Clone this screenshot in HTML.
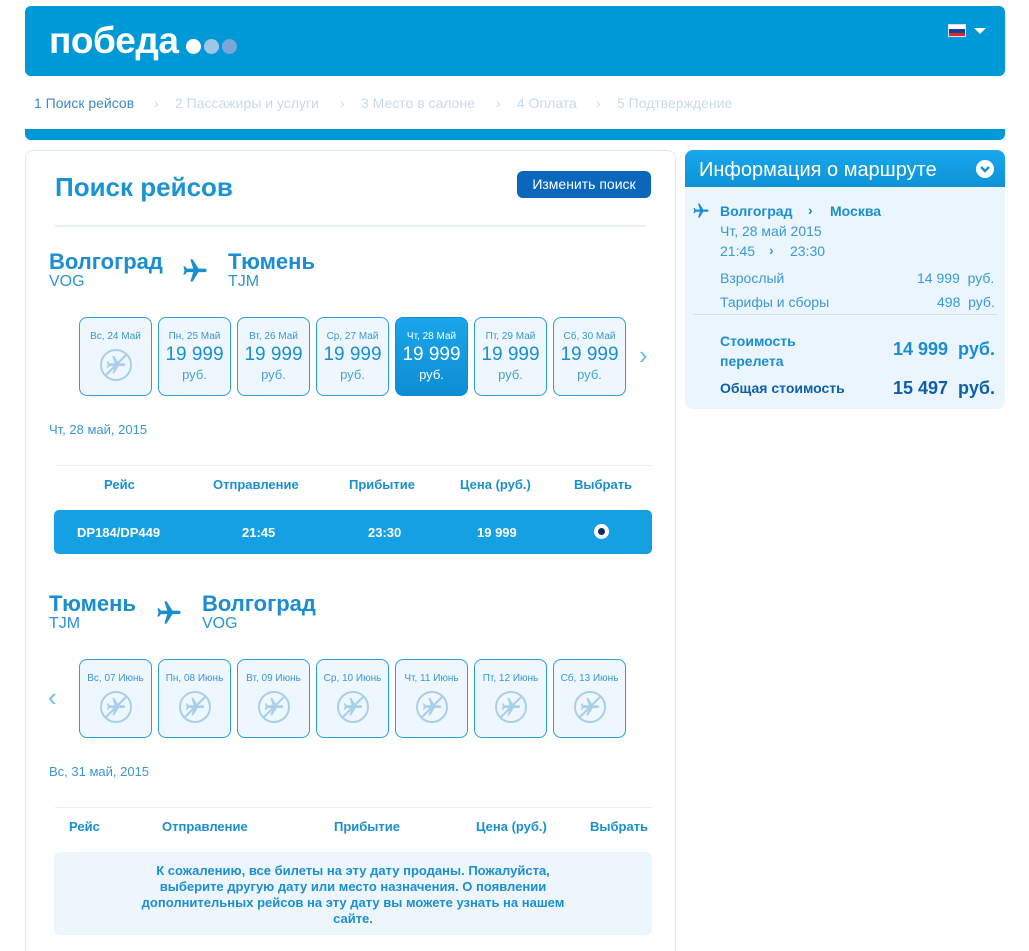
<!DOCTYPE html>
<html style="overflow:hidden;height:951px"><head><meta charset="utf-8"><style>
*{margin:0;padding:0;box-sizing:border-box}
body{width:1029px;height:951px;background:#fff;font-family:"Liberation Sans","Noto Sans CJK SC",sans-serif;position:relative;overflow:hidden;color:#1a8fd0}
.a{position:absolute;white-space:nowrap}
.hdr{left:25px;top:6px;width:980px;height:70px;background:#0099d8;border-radius:6px}
.logo{left:49px;top:20px;font-size:37px;font-weight:bold;color:#fff;letter-spacing:-0.5px}
.dot{position:absolute;width:15px;height:15px;border-radius:50%}
.bc{top:95px;font-size:14px;color:#c5dbec}
.bar{left:25px;top:129px;width:980px;height:11px;background:#0099d8;border-radius:0 0 6px 6px}
.lp{left:25px;top:150px;width:651px;height:830px;border:1px solid #dce9f3;border-radius:8px}
.title{left:55px;top:172px;font-size:26px;font-weight:bold;color:#1993d2}
.btn{left:517px;top:171px;width:134px;height:27px;background:#0b67bb;border-radius:6px;color:#fff;font-size:14px;text-align:center;line-height:27px}
.hr{height:2px;background:#e6eff7}
.city{font-size:22px;font-weight:bold;color:#1a8ed0}
.code{font-size:16px;color:#2a95d2}
.card{position:absolute;width:73px;height:79px;border:1px solid #2b9fd6;border-radius:8px;background:#eef7fd;text-align:center;color:#1a8fd0}
.card .d{font-size:10px;margin-top:13px;color:#3a97cf}
.card .p{font-size:19px;line-height:22px;margin-top:2px}
.card .r{font-size:13px;margin-top:1px;color:#4aa0d3}
.card.sel{background:linear-gradient(#19a6ea,#0e8dd5);border-color:#0e8dd5;color:#fff}
.card.sel .d,.card.sel .r{color:#fff}
.card svg{margin-top:6px}
.th{font-size:13px;font-weight:bold;color:#1a8fd0}
.row{left:54px;top:510px;width:598px;height:44px;background:#15a0e3;border-radius:5px;color:#fff;font-weight:bold;font-size:13px}
.msg{left:54px;top:852px;width:598px;height:83px;background:#eef6fd;border-radius:6px;text-align:center;font-size:13px;font-weight:bold;color:#1b8fd0;line-height:16px;padding-top:11px}
.rp{left:685px;top:150px;width:320px;height:259px;background:#eaf5fd;border-radius:8px;overflow:hidden}
.rph{height:37px;background:linear-gradient(#19a8ec,#0d92d8);color:#fff;font-size:20px;padding:9px 0 0 14px}
.rt{font-size:14px;color:#3a9ad3}
</style></head><body>
<div class="a hdr"></div>
<div class="a logo">победа</div>
<div class="dot" style="left:186px;top:39px;background:#fff"></div>
<div class="dot" style="left:204px;top:39px;background:#9fc6e6"></div>
<div class="dot" style="left:222px;top:39px;background:#7ba6d6"></div>
<div class="a" style="left:948px;top:24px;width:18px;height:13px;border:1px solid #ddd">
<div style="height:4px;background:#fff"></div><div style="height:4px;background:#1a3e9c"></div><div style="height:3px;background:#d92b2b"></div></div>
<div class="a" style="left:974px;top:28px;width:0;height:0;border-left:6px solid transparent;border-right:6px solid transparent;border-top:6px solid #fff"></div>

<div class="a bc" style="left:34px;color:#3a8cc0">1 Поиск рейсов</div>
<div class="a bc" style="left:154px">›</div>
<div class="a bc" style="left:175px">2 Пассажиры и услуги</div>
<div class="a bc" style="left:340px">›</div>
<div class="a bc" style="left:361px">3 Место в салоне</div>
<div class="a bc" style="left:496px">›</div>
<div class="a bc" style="left:517px">4 Оплата</div>
<div class="a bc" style="left:596px">›</div>
<div class="a bc" style="left:617px">5 Подтверждение</div>
<div class="a bar"></div>

<div class="a lp"></div>
<div class="a title">Поиск рейсов</div>
<div class="a btn">Изменить поиск</div>
<div class="a hr" style="left:55px;top:225px;width:591px"></div>

<div class="a city" style="left:49px;top:249px">Волгоград</div>
<div class="a code" style="left:49px;top:273px">VOG</div>
<svg class="a" style="left:181px;top:257px" width="28" height="28" viewBox="0 0 24 24"><path transform="rotate(90 12 12)" fill="#1a8fd0" d="M21 16v-2l-8-5V3.5c0-.83-.67-1.5-1.5-1.5S10 2.67 10 3.5V9l-8 5v2l8-2.5V19l-2 1.5V22l3.5-1 3.5 1v-1.5L13 19v-5.5l8 2.5z"/></svg>
<div class="a city" style="left:228px;top:249px">Тюмень</div>
<div class="a code" style="left:228px;top:273px">TJM</div>

<div class="card" style="left:79px;top:317px"><div class="d">Вс, 24 Май</div><svg width="34" height="34" viewBox="0 0 34 34"><circle cx="17" cy="17" r="15" fill="none" stroke="#a8d0eb" stroke-width="2"/><path transform="translate(6 6) scale(.92) rotate(90 12 12)" fill="#a8d0eb" d="M21 16v-2l-8-5V3.5c0-.83-.67-1.5-1.5-1.5S10 2.67 10 3.5V9l-8 5v2l8-2.5V19l-2 1.5V22l3.5-1 3.5 1v-1.5L13 19v-5.5l8 2.5z"/><path d="M6 28L28 6" stroke="#a8d0eb" stroke-width="2"/></svg></div>
<div class="card" style="left:158px;top:317px"><div class="d">Пн, 25 Май</div><div class="p">19 999</div><div class="r">руб.</div></div>
<div class="card" style="left:237px;top:317px"><div class="d">Вт, 26 Май</div><div class="p">19 999</div><div class="r">руб.</div></div>
<div class="card" style="left:316px;top:317px"><div class="d">Ср, 27 Май</div><div class="p">19 999</div><div class="r">руб.</div></div>
<div class="card sel" style="left:395px;top:317px"><div class="d">Чт, 28 Май</div><div class="p">19 999</div><div class="r">руб.</div></div>
<div class="card" style="left:474px;top:317px"><div class="d">Пт, 29 Май</div><div class="p">19 999</div><div class="r">руб.</div></div>
<div class="card" style="left:553px;top:317px"><div class="d">Сб, 30 Май</div><div class="p">19 999</div><div class="r">руб.</div></div>
<div class="a" style="left:639px;top:340px;font-size:26px;color:#6ebde3">›</div>

<div class="a" style="left:49px;top:422px;font-size:13px;color:#3a97cf">Чт, 28 май, 2015</div>
<div class="a hr" style="left:55px;top:465px;width:597px;height:1px"></div>
<div class="a th" style="left:104px;top:477px">Рейс</div>
<div class="a th" style="left:213px;top:477px">Отправление</div>
<div class="a th" style="left:349px;top:477px">Прибытие</div>
<div class="a th" style="left:460px;top:477px">Цена (руб.)</div>
<div class="a th" style="left:574px;top:477px">Выбрать</div>
<div class="a row">
<span class="a" style="left:23px;top:15px">DP184/DP449</span>
<span class="a" style="left:188px;top:15px">21:45</span>
<span class="a" style="left:314px;top:15px">23:30</span>
<span class="a" style="left:423px;top:15px">19 999</span>
<span class="a" style="left:540px;top:14px;width:15px;height:15px;border-radius:50%;background:#fff"><span class="a" style="left:4px;top:4px;width:7px;height:7px;border-radius:50%;background:#0e2d5e"></span></span>
</div>

<div class="a city" style="left:49px;top:591px">Тюмень</div>
<div class="a code" style="left:49px;top:615px">TJM</div>
<svg class="a" style="left:155px;top:599px" width="28" height="28" viewBox="0 0 24 24"><path transform="rotate(90 12 12)" fill="#1a8fd0" d="M21 16v-2l-8-5V3.5c0-.83-.67-1.5-1.5-1.5S10 2.67 10 3.5V9l-8 5v2l8-2.5V19l-2 1.5V22l3.5-1 3.5 1v-1.5L13 19v-5.5l8 2.5z"/></svg>
<div class="a city" style="left:202px;top:591px">Волгоград</div>
<div class="a code" style="left:202px;top:615px">VOG</div>

<div class="a" style="left:48px;top:682px;font-size:26px;color:#6ebde3">‹</div>
<div class="card" style="left:79px;top:659px"><div class="d">Вс, 07 Июнь</div><svg width="34" height="34" viewBox="0 0 34 34"><circle cx="17" cy="17" r="15" fill="none" stroke="#a8d0eb" stroke-width="2"/><path transform="translate(6 6) scale(.92) rotate(90 12 12)" fill="#a8d0eb" d="M21 16v-2l-8-5V3.5c0-.83-.67-1.5-1.5-1.5S10 2.67 10 3.5V9l-8 5v2l8-2.5V19l-2 1.5V22l3.5-1 3.5 1v-1.5L13 19v-5.5l8 2.5z"/><path d="M6 28L28 6" stroke="#a8d0eb" stroke-width="2"/></svg></div>
<div class="card" style="left:158px;top:659px"><div class="d">Пн, 08 Июнь</div><svg width="34" height="34" viewBox="0 0 34 34"><circle cx="17" cy="17" r="15" fill="none" stroke="#a8d0eb" stroke-width="2"/><path transform="translate(6 6) scale(.92) rotate(90 12 12)" fill="#a8d0eb" d="M21 16v-2l-8-5V3.5c0-.83-.67-1.5-1.5-1.5S10 2.67 10 3.5V9l-8 5v2l8-2.5V19l-2 1.5V22l3.5-1 3.5 1v-1.5L13 19v-5.5l8 2.5z"/><path d="M6 28L28 6" stroke="#a8d0eb" stroke-width="2"/></svg></div>
<div class="card" style="left:237px;top:659px"><div class="d">Вт, 09 Июнь</div><svg width="34" height="34" viewBox="0 0 34 34"><circle cx="17" cy="17" r="15" fill="none" stroke="#a8d0eb" stroke-width="2"/><path transform="translate(6 6) scale(.92) rotate(90 12 12)" fill="#a8d0eb" d="M21 16v-2l-8-5V3.5c0-.83-.67-1.5-1.5-1.5S10 2.67 10 3.5V9l-8 5v2l8-2.5V19l-2 1.5V22l3.5-1 3.5 1v-1.5L13 19v-5.5l8 2.5z"/><path d="M6 28L28 6" stroke="#a8d0eb" stroke-width="2"/></svg></div>
<div class="card" style="left:316px;top:659px"><div class="d">Ср, 10 Июнь</div><svg width="34" height="34" viewBox="0 0 34 34"><circle cx="17" cy="17" r="15" fill="none" stroke="#a8d0eb" stroke-width="2"/><path transform="translate(6 6) scale(.92) rotate(90 12 12)" fill="#a8d0eb" d="M21 16v-2l-8-5V3.5c0-.83-.67-1.5-1.5-1.5S10 2.67 10 3.5V9l-8 5v2l8-2.5V19l-2 1.5V22l3.5-1 3.5 1v-1.5L13 19v-5.5l8 2.5z"/><path d="M6 28L28 6" stroke="#a8d0eb" stroke-width="2"/></svg></div>
<div class="card" style="left:395px;top:659px"><div class="d">Чт, 11 Июнь</div><svg width="34" height="34" viewBox="0 0 34 34"><circle cx="17" cy="17" r="15" fill="none" stroke="#a8d0eb" stroke-width="2"/><path transform="translate(6 6) scale(.92) rotate(90 12 12)" fill="#a8d0eb" d="M21 16v-2l-8-5V3.5c0-.83-.67-1.5-1.5-1.5S10 2.67 10 3.5V9l-8 5v2l8-2.5V19l-2 1.5V22l3.5-1 3.5 1v-1.5L13 19v-5.5l8 2.5z"/><path d="M6 28L28 6" stroke="#a8d0eb" stroke-width="2"/></svg></div>
<div class="card" style="left:474px;top:659px"><div class="d">Пт, 12 Июнь</div><svg width="34" height="34" viewBox="0 0 34 34"><circle cx="17" cy="17" r="15" fill="none" stroke="#a8d0eb" stroke-width="2"/><path transform="translate(6 6) scale(.92) rotate(90 12 12)" fill="#a8d0eb" d="M21 16v-2l-8-5V3.5c0-.83-.67-1.5-1.5-1.5S10 2.67 10 3.5V9l-8 5v2l8-2.5V19l-2 1.5V22l3.5-1 3.5 1v-1.5L13 19v-5.5l8 2.5z"/><path d="M6 28L28 6" stroke="#a8d0eb" stroke-width="2"/></svg></div>
<div class="card" style="left:553px;top:659px"><div class="d">Сб, 13 Июнь</div><svg width="34" height="34" viewBox="0 0 34 34"><circle cx="17" cy="17" r="15" fill="none" stroke="#a8d0eb" stroke-width="2"/><path transform="translate(6 6) scale(.92) rotate(90 12 12)" fill="#a8d0eb" d="M21 16v-2l-8-5V3.5c0-.83-.67-1.5-1.5-1.5S10 2.67 10 3.5V9l-8 5v2l8-2.5V19l-2 1.5V22l3.5-1 3.5 1v-1.5L13 19v-5.5l8 2.5z"/><path d="M6 28L28 6" stroke="#a8d0eb" stroke-width="2"/></svg></div>

<div class="a" style="left:49px;top:764px;font-size:13px;color:#3a97cf">Вс, 31 май, 2015</div>
<div class="a hr" style="left:55px;top:807px;width:597px;height:1px"></div>
<div class="a th" style="left:69px;top:819px">Рейс</div>
<div class="a th" style="left:162px;top:819px">Отправление</div>
<div class="a th" style="left:334px;top:819px">Прибытие</div>
<div class="a th" style="left:476px;top:819px">Цена (руб.)</div>
<div class="a th" style="left:590px;top:819px">Выбрать</div>
<div class="a msg">К сожалению, все билеты на эту дату проданы. Пожалуйста,<br>выберите другую дату или место назначения. О появлении<br>дополнительных рейсов на эту дату вы можете узнать на нашем<br>сайте.</div>

<div class="a rp"><div class="rph">Информация о маршруте</div></div>
<div class="a" style="left:976px;top:160px;width:18px;height:18px;border-radius:50%;background:#fff"></div>
<svg class="a" style="left:979px;top:164px" width="12" height="10" viewBox="0 0 12 10"><path d="M2 3l4 4 4-4" stroke="#0d92d8" stroke-width="2.4" fill="none"/></svg>
<svg class="a" style="left:692px;top:202px" width="18" height="18" viewBox="0 0 24 24"><path transform="rotate(90 12 12)" fill="#1a8fd0" d="M21 16v-2l-8-5V3.5c0-.83-.67-1.5-1.5-1.5S10 2.67 10 3.5V9l-8 5v2l8-2.5V19l-2 1.5V22l3.5-1 3.5 1v-1.5L13 19v-5.5l8 2.5z"/></svg>
<div class="a" style="left:720px;top:203px;font-size:14px;font-weight:bold;color:#1a8fd0">Волгоград</div>
<div class="a" style="left:808px;top:202px;font-size:14px;font-weight:bold;color:#1a8fd0">›</div>
<div class="a" style="left:830px;top:203px;font-size:14px;font-weight:bold;color:#1a8fd0">Москва</div>
<div class="a rt" style="left:720px;top:223px">Чт, 28 май 2015</div>
<div class="a rt" style="left:720px;top:243px">21:45</div>
<div class="a rt" style="left:769px;top:242px;font-weight:bold">›</div>
<div class="a rt" style="left:790px;top:243px">23:30</div>
<div class="a rt" style="left:720px;top:270px">Взрослый</div>
<div class="a rt" style="left:917px;top:270px">14 999 &nbsp;руб.</div>
<div class="a rt" style="left:720px;top:294px">Тарифы и сборы</div>
<div class="a rt" style="left:937px;top:294px">498 &nbsp;руб.</div>
<div class="a" style="left:693px;top:314px;width:304px;height:1px;background:#cfe0ee"></div>
<div class="a" style="left:720px;top:331px;font-size:14px;font-weight:bold;color:#1a8fd0;line-height:20px">Стоимость<br>перелета</div>
<div class="a" style="left:893px;top:339px;font-size:18px;font-weight:bold;color:#1a8fd0">14 999 &nbsp;руб.</div>
<div class="a" style="left:720px;top:380px;font-size:14px;font-weight:bold;color:#0e5fa8">Общая стоимость</div>
<div class="a" style="left:893px;top:378px;font-size:18px;font-weight:bold;color:#0e5fa8">15 497 &nbsp;руб.</div>
</body></html>
